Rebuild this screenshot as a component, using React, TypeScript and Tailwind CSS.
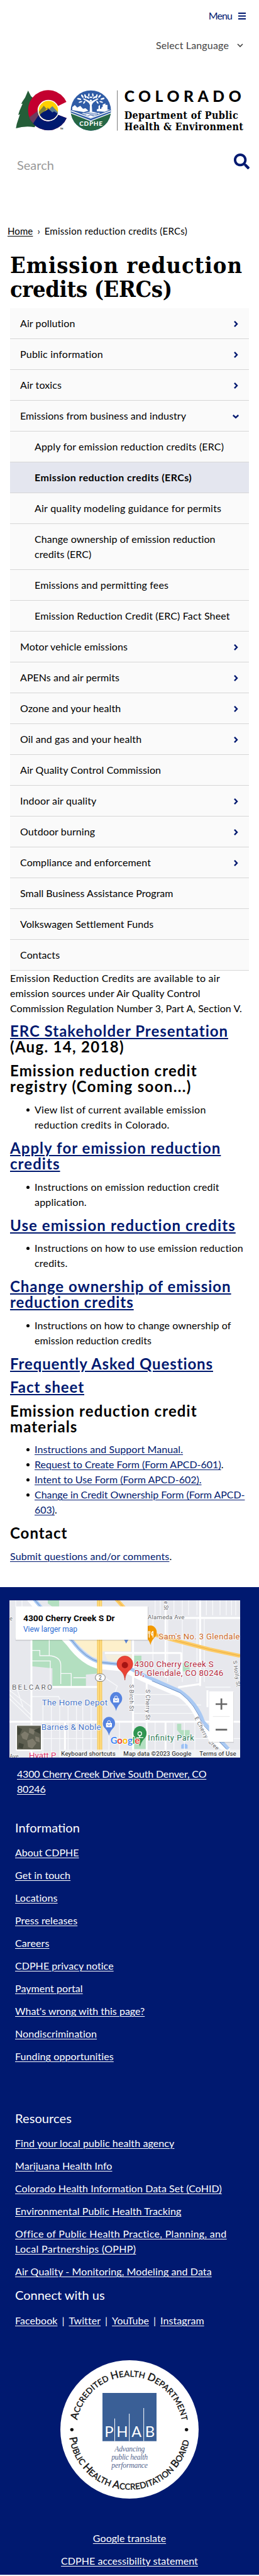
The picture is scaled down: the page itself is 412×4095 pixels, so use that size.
import React from "react";
import { FaSearch } from "react-icons/fa";

type Item = { label: React.ReactNode; kind?: "open" | "closed" | "sub" | "active"; tracking?: string };

const NAV: Item[] = [
  { label: "Air pollution", kind: "closed", tracking: "tracking-[0.09px]" },
  { label: "Public information", kind: "closed", tracking: "tracking-[0.21px]" },
  { label: "Air toxics", kind: "closed", tracking: "tracking-[0.1px]" },
  { label: "Emissions from business and industry", kind: "open", tracking: "tracking-[0.07px]" },
  { label: "Apply for emission reduction credits (ERC)", kind: "sub", tracking: "tracking-[0.16px]" },
  { label: "Emission reduction credits (ERCs)", kind: "active", tracking: "tracking-[0.42px]" },
  { label: "Air quality modeling guidance for permits", kind: "sub", tracking: "tracking-[0.23px]" },
  {
    label: (
      <>
        Change ownership of emission reduction
        <br />
        credits (ERC)
      </>
    ),
    kind: "sub",
    tracking: "tracking-[0.06px]",
  },
  { label: "Emissions and permitting fees", kind: "sub", tracking: "tracking-[0.15px]" },
  { label: "Emission Reduction Credit (ERC) Fact Sheet", kind: "sub", tracking: "tracking-[0.16px]" },
  { label: "Motor vehicle emissions", kind: "closed", tracking: "tracking-[0.1px]" },
  { label: "APENs and air permits", kind: "closed", tracking: "tracking-[0.05px]" },
  { label: "Ozone and your health", kind: "closed", tracking: "tracking-[0.05px]" },
  { label: "Oil and gas and your health", kind: "closed", tracking: "tracking-[0.1px]" },
  { label: "Air Quality Control Commission", tracking: "tracking-[0.1px]" },
  { label: "Indoor air quality", kind: "closed", tracking: "tracking-[0.15px]" },
  { label: "Outdoor burning", kind: "closed", tracking: "tracking-[0.1px]" },
  { label: "Compliance and enforcement", kind: "closed", tracking: "tracking-[0.1px]" },
  { label: "Small Business Assistance Program", tracking: "tracking-[0.01px]" },
  { label: "Volkswagen Settlement Funds", tracking: "tracking-[0.05px]" },
  { label: "Contacts", tracking: "tracking-[0.1px]" },
];

function Arrow({ down }: { down?: boolean }) {
  return (
    <svg className="mt-px mr-[15px] h-3 w-3 shrink-0" viewBox="0 0 12 12" fill="none" stroke="#001970" strokeWidth="2.4">
      <path d={down ? "M1.8 4 6 7.8 10.2 4" : "M4 1.8 8 6 4 10.2"} />
    </svg>
  );
}

function NavRow({ item }: { item: Item }) {
  const sub = item.kind === "sub" || item.kind === "active";
  return (
    <li
      className={
        "flex items-center justify-between border-b border-[#d6d6d6] py-3 leading-6 " +
        (sub ? "pl-[39px] " : "pl-4 ") +
        (item.kind === "active" ? "bg-[#e4e6ef] font-bold " : "bg-[#fafafa] ") +
        (item.tracking ?? "")
      }
    >
      <span className="whitespace-nowrap">{item.label}</span>
      {item.kind === "closed" && <Arrow />}
      {item.kind === "open" && <Arrow down />}
    </li>
  );
}

function A({ children, className = "" }: { children: React.ReactNode; className?: string }) {
  return (
    <a href="#" className={"underline decoration-1 underline-offset-2 " + className}>
      {children}
    </a>
  );
}

function H2({ children, className }: { children: React.ReactNode; className: string }) {
  return <h2 className={"text-[24px] leading-[25px] font-bold whitespace-nowrap " + className}>{children}</h2>;
}

function HA({ children }: { children: React.ReactNode }) {
  return (
    <a href="#" className="text-[#001970] underline decoration-2 underline-offset-2">
      {children}
    </a>
  );
}

function Bullet({ children, className = "" }: { children: React.ReactNode; className?: string }) {
  return (
    <li className={"relative pl-[39px] whitespace-nowrap " + className}>
      <span className="absolute top-[10px] left-[26px] h-[5px] w-[5px] rounded-full bg-black" />
      {children}
    </li>
  );
}

function Logo() {
  return (
    <svg className="h-[66px] w-[364px]" viewBox="75 430 1092 198">
      <path
        d="M134 433 L120 466 L108 484 L101 497 L108 495 L93 530 L87 549 L95 546 L80 592 L76 613 Q120 600 165 608 L190 560 L160 470 L148 460Z"
        fill="#245d38"
      />
      <defs>
        <clipPath id="c-shape">
          <path d="M317 487 A96 96 0 1 0 318 564 L275 548 A50 50 0 1 1 274 508Z" />
        </clipPath>
        <clipPath id="c-disc">
          <circle cx="231" cy="528" r="46" />
        </clipPath>
        <clipPath id="seal">
          <circle cx="433.500" cy="528" r="96" />
        </clipPath>
      </defs>
      <g clipPath="url(#c-shape)">
        <rect x="130" y="430" width="200" height="200" fill="#c3002f" />
        <path d="M130 588 L188 540 L340 540 L340 630 L130 630Z" fill="#001970" />
        <path d="M134 565 L182 528 L188 545 L158 590Z" fill="#6b3b5d" />
        <path d="M136 565 L158 588 L168 606 L150 606Z" fill="#245d38" />
      </g>
      <circle cx="231" cy="528" r="51" fill="#fff" />
      <g clipPath="url(#c-disc)">
        <rect x="180" y="478" width="102" height="102" fill="#ffd100" />
        <path d="M180 540 L209 505 L222 520 L200 548Z" fill="#7d8038" />
        <path d="M232 524 L250 507 L285 545 L255 545Z" fill="#5c7f93" />
        <path d="M222 520 L228 513 L240 524 L232 530Z" fill="#a08b30" />
        <path d="M180 555 L202 538 L232 521 L250 537 L258 532 L285 548 L285 580 L180 580Z" fill="#001970" />
      </g>
      <text x="287" y="620" fontSize="9" fontFamily="Lato" fontWeight="bold">TM</text>

      <g clipPath="url(#seal)">
        <rect x="335" y="430" width="200" height="200" fill="#2f5ca6" />
        <path d="M337 537 L433 580 L530 537 L530 630 L337 630Z" fill="#266845" />
        <path d="M337 529 L433 564 L530 529 M337 540 L433 577 L530 540" fill="none" stroke="#fff" strokeWidth="4" />
        <path d="M345 526 L345 512 L357 502 L369 514 L383 506 L396 520 L408 517 L422 529 L400 536Z" fill="#fff" />
        <path d="M462 531 L462 523 L470 520 L470 507 L477 501 L477 520 L484 520 L484 514 L490 510 L490 500 L503 494 L503 501 L513 501 L513 524 L525 524 L500 534Z" fill="#fff" />
        <path d="M390 541 L425 534 L445 534 L480 541 L433 562Z" fill="#fff" />
        <path d="M404 546 q16 -7 30 0 t34 -1 M398 541 q18 -5 32 -1 t38 0 M418 553 q14 -6 30 0" fill="none" stroke="#2f5ca6" strokeWidth="2.500" />
        <path d="M428 536 L429 502 L424 492 L410 482 L396 474 L399 470 L424 481 L433 487 L443 481 L466 470 L470 474 L456 482 L443 492 L438 502 L440 536Z" fill="#fff" />
        <circle cx="433.500" cy="481" r="5.500" fill="#fff" />
        <g fill="#fff">
          <ellipse cx="378" cy="473" rx="10" ry="4" transform="rotate(15 378 473)" />
          <ellipse cx="384" cy="487" rx="9" ry="3.500" transform="rotate(-20 384 487)" />
          <ellipse cx="402" cy="489" rx="8" ry="3.500" transform="rotate(-55 402 489)" />
          <ellipse cx="393" cy="460" rx="9" ry="4" transform="rotate(55 393 460)" />
          <ellipse cx="407" cy="460" rx="10" ry="4" transform="rotate(75 407 460)" />
          <ellipse cx="419" cy="466" rx="9" ry="3.500" transform="rotate(35 419 466)" />
          <ellipse cx="424" cy="454" rx="8" ry="3.500" transform="rotate(95 424 454)" />
          <ellipse cx="434" cy="465" rx="7" ry="3.500" />
          <ellipse cx="443" cy="454" rx="8" ry="3.500" transform="rotate(80 443 454)" />
          <ellipse cx="450" cy="466" rx="9" ry="3.500" transform="rotate(-35 450 466)" />
          <ellipse cx="461" cy="460" rx="10" ry="4" transform="rotate(-75 461 460)" />
          <ellipse cx="475" cy="460" rx="9" ry="4" transform="rotate(-50 475 460)" />
          <ellipse cx="489" cy="472" rx="10" ry="4" transform="rotate(-15 489 472)" />
          <ellipse cx="483" cy="487" rx="9" ry="3.500" transform="rotate(20 483 487)" />
          <ellipse cx="465" cy="489" rx="8" ry="3.500" transform="rotate(55 465 489)" />
        </g>
        <text x="379" y="602" fill="#fff" fontSize="30" fontWeight="900" fontFamily="Lato" textLength="110">CDPHE</text>
      </g>
      <rect x="558.500" y="432" width="3" height="192" fill="#777" />
      <text x="593" y="487" fontSize="74" fontWeight="900" fontFamily="Lato" textLength="558">COLORADO</text>
      <text x="593" y="567" fontSize="48" fontWeight="bold" fontFamily="'DejaVu Serif Condensed', 'DejaVu Serif', serif" textLength="543">Department of Public</text>
      <text x="593" y="622" fontSize="48" fontWeight="bold" fontFamily="'DejaVu Serif Condensed', 'DejaVu Serif', serif" textLength="568">Health &amp; Environment</text>
    </svg>
  );
}

function Pin({ x, y, s, fill }: { x: number; y: number; s: number; fill: string }) {
  return (
    <g transform={`translate(${x} ${y}) scale(${s})`}>
      <path d="M0 0 C-3 -14 -9 -22 -18 -32 A29 29 0 1 1 18 -32 C9 -22 3 -14 0 0Z" fill={fill} transform="scale(1 1.08)" />
    </g>
  );
}

function MapPicture() {
  return (
    <svg className="block h-[250px] w-[367px]" viewBox="45 191 1101 750" fontFamily="Roboto">
      <rect x="45" y="190" width="1101" height="752" fill="#e7e8ed" />
      <path d="M228 190 H282 V222 H250 L228 205Z M150 380 H320 L345 420 Q400 490 470 512 L470 540 L410 545 V600 H250 V515 L150 505Z" fill="#b3dfc0" />
      <path d="M300 470 L335 470 L350 520 L380 545 V600 H300Z" fill="#b3dfc0" />
      <path d="M640 455 H675 V505 H640Z M845 780 H865 V810 H905 V850 H880 L845 810Z M640 800 H700 V900 H640Z M870 490 H905 V530 H870Z" fill="#b3dfc0" />
      <path d="M865 880 q15 -12 30 0 v18 h-30Z" fill="#9cc0f5" />
      <path d="M350 380 H625 V435 H490 V470 L440 460 Q390 420 350 380Z" fill="#fdf0cb" />
      <path d="M500 450 H630 V480 H560 L520 490Z" fill="#f3eedd" />
      <g stroke="#f8f9fb" strokeWidth="4" fill="none">
        {[75, 105, 740, 765, 830, 870, 900, 940, 985, 1015, 1050, 1080, 1105, 1125].map((x) => (
          <path key={x} d={`M${x} 190 V${x < 200 ? 370 : 262}`} />
        ))}
        {[205, 245, 285, 325, 365, 395, 435].map((x) => (
          <path key={x} d={`M${x} 690 V940`} />
        ))}
        {[730, 800, 870, 940, 975].map((x) => (
          <path key={x} d={`M${x} 280 V580`} />
        ))}
        {[520, 570, 740, 830, 880, 930].map((x) => (
          <path key={x} d={`M${x} 770 V940`} />
        ))}
        <path d="M150 430 H190 V455 H235 V380 M235 455 Q290 460 290 500 V590 M150 480 H240 V600 M290 540 H340 V600 M350 560 H410 M150 650 H280 L300 700 M45 640 L150 740 M45 660 L150 760 M45 620 L150 700 M80 610 L110 700 M150 850 H480 M640 640 H850 M640 690 H960 M640 730 H940 M500 560 L560 600 L545 640 M700 850 H1146 M980 605 H1100" />
      </g>
      <g stroke="#fff" strokeWidth="9" fill="none">
        <path d="M150 380 V940 M250 604 H470 M45 770 H1146 M700 275 H1146 M635 380 V940 M500 442 H865 M865 440 V560 M790 190 V560 M700 570 V940 M955 190 V600 M850 606 L955 590 M310 770 V940 M790 770 V940 M990 620 V700" />
      </g>
      <path d="M140 180 Q230 290 330 395 Q400 490 480 505 L590 515 Q640 545 720 580 L860 640 Q930 690 960 780 L1010 850 L1090 910" fill="none" stroke="#fff" strokeWidth="30" />
      <path d="M158 180 Q250 290 345 385 Q410 470 480 487 L590 498 Q640 530 725 565 L860 625 Q940 680 970 770 L1090 900" fill="none" stroke="#a9c9f3" strokeWidth="16" />
      <path d="M158 180 Q250 290 345 385 Q410 470 480 487 L590 498 M725 575 L860 632 Q935 690 965 780 L1080 900" fill="none" stroke="#6b8fc4" strokeWidth="3" />
      <path d="M475 190 L476 940" stroke="#f5ca62" strokeWidth="24" />
      <path d="M475 190 L476 940" stroke="#ffdc7e" strokeWidth="16" />
      <path d="M475 190 L476 940" stroke="#efbd55" strokeWidth="3" />
      <path d="M550 180 L600 235 L720 350 L840 383 L1000 425 L1146 456" stroke="#fdcb66" strokeWidth="18" fill="none" />
      <path d="M550 180 L600 235 L720 350 L840 383 L1000 425 L1146 456" stroke="#e6a738" strokeWidth="2.500" fill="none" />
      <rect x="455" y="542" width="47" height="35" rx="17" fill="#fff" stroke="#777" strokeWidth="3" />
      <text x="471" y="569" fontSize="25" fill="#444">2</text>

      <g fill="#5f6368" stroke="#fff" strokeWidth="5" paintOrder="stroke">
        <text x="705" y="282" fontSize="29" textLength="175">Alameda Ave</text>
        <text x="46" y="288" fontSize="26">e</text>
        <text transform="translate(783 195) rotate(90)" fontSize="25">e St</text>
        <text x="57" y="617" fontSize="35" textLength="192">BELCARO</text>
        <text transform="translate(617 592) rotate(90)" fontSize="27" textLength="127">S Birch St</text>
        <text transform="translate(696 616) rotate(90)" fontSize="27" textLength="146">S Cherry St</text>
        <text transform="translate(1112 480) rotate(82)" fontSize="26" textLength="125">S Holly St</text>
        <text transform="translate(928 752) rotate(63)" fontSize="27" textLength="110">E Cherry</text>
        <text transform="translate(992 868) rotate(42)" fontSize="27" textLength="58">Cree</text>
        <text x="46" y="944" fontSize="26">Ave</text>
      </g>

      <Pin x={718} y={404} s={1.03} fill="#f29900" />
      <path d="M709 337 v14 m6 -14 v14 m-3 0 v18 m18 -32 v32 m0 -30 q-8 4 -7 17 h7" stroke="#fff" strokeWidth="4" fill="none" />
      <text x="757" y="376" fontSize="39" fill="#c9661f" stroke="#fff" strokeWidth="5" paintOrder="stroke" textLength="387">Sam&apos;s No. 3 Glendale</text>
      <path d="M592 378 H613 L602 397Z" fill="#5b83d5" />

      <g transform="translate(596 572)">
        <path d="M0 0 C-3 -32 -14 -40 -29 -53 A38 38 0 1 1 29 -53 C14 -40 3 -32 0 0Z" fill="#ea4335" stroke="#c5352b" strokeWidth="2" />
        <circle cy="-72" r="15" fill="#a51412" />
      </g>
      <g fill="#b3293e" fontSize="40" stroke="#fff" strokeWidth="5" paintOrder="stroke">
        <text x="641" y="509" textLength="378">4300 Cherry Creek S</text>
        <text x="641" y="551" textLength="425">Dr, Glendale, CO 80246</text>
      </g>
      <g fill="#4674c8" fontSize="40" stroke="#fff" strokeWidth="5" paintOrder="stroke">
        <text x="200" y="692" textLength="313">The Home Depot</text>
        <text x="197" y="809" textLength="285">Barnes &amp; Noble</text>
      </g>
      <Pin x={554} y={719} s={1} fill="#5583e0" />
      <Pin x={520} y={837} s={1} fill="#5583e0" />
      <g fill="#fff">
        <path d="M540 658 h28 v20 h-28Z" />
        <path d="M506 776 h28 v20 h-28Z" />
      </g>
      <path d="M547 658 v-4 a7 7 0 0 1 14 0 v4 M513 776 v-4 a7 7 0 0 1 14 0 v4" fill="none" stroke="#fff" strokeWidth="3" />
      <path d="M548 664 a6 6 0 0 0 12 0 M514 782 a6 6 0 0 0 12 0" fill="none" stroke="#5583e0" strokeWidth="3" />
      <Pin x={668} y={889} s={1.08} fill="#2f9551" />
      <circle cx="667" cy="827" r="9" fill="none" stroke="#fff" strokeWidth="4" />
      <path d="M650 846 h34 M667 834 v12" stroke="#fff" strokeWidth="4" />
      <text x="706" y="861" fontSize="38" fill="#2a7a55" stroke="#fff" strokeWidth="5" paintOrder="stroke" textLength="220">Infinity Park</text>

      <g fontSize="45" fontFamily="Lato" fontWeight="bold" stroke="#fff" strokeWidth="5" paintOrder="stroke">
        <text x="527" y="876" textLength="140">
          <tspan fill="#4285f4">G</tspan><tspan fill="#ea4335">o</tspan><tspan fill="#fbbc05">o</tspan><tspan fill="#4285f4">g</tspan><tspan fill="#34a853">l</tspan><tspan fill="#ea4335">e</tspan>
        </text>
      </g>

      <rect x="74" y="222" width="634" height="162" fill="#000" fillOpacity="0.12" />
      <rect x="75" y="220" width="630" height="159" fill="#fff" />
      <text x="111" y="290" fontSize="41" fontWeight="bold" fill="#000" textLength="437" lengthAdjust="spacingAndGlyphs">4300 Cherry Creek S Dr</text>
      <text x="111" y="341" fontSize="36" fill="#2b6bd3" textLength="258">View larger map</text>

      <rect x="1000" y="628" width="116" height="242" fill="#000" fillOpacity="0.12" />
      <rect x="998" y="625" width="116" height="241" fill="#fff" />
      <path d="M1016 745 H1096" stroke="#e6e6e6" strokeWidth="3" />
      <path d="M1029 686 H1084 M1056.500 659 V712 M1029 808 H1084" stroke="#666" strokeWidth="8" />

      <text x="138" y="944" fontSize="40" fill="#d6336c" stroke="#fff" strokeWidth="5" paintOrder="stroke">Hyatt P</text>
      <rect x="282" y="903" width="864" height="39" fill="#f3f4f6" fillOpacity="0.88" />
      <g fontSize="29" fill="#111">
        <text x="292" y="932" textLength="259">Keyboard shortcuts</text>
        <text x="589" y="932" textLength="324">Map data ©2023 Google</text>
        <text x="952" y="932" textLength="175">Terms of Use</text>
      </g>
      <rect x="76" y="786" width="124" height="123" fill="#fff" />
      <rect x="81" y="789" width="114" height="113" fill="#5e5f51" />
      <g fill="#8c8878" fillOpacity="0.7">
        <path d="M100 830 l18 -14 20 12 -10 30 -20 -8Z M140 800 l28 8 -8 24 -22 -10Z M130 860 l26 -10 18 22 -20 26 -20 -8Z M168 840 l20 6 2 22 -20 -6Z" />
      </g>
      <path d="M84 795 l22 10 -14 30 -8 -4Z M90 870 l24 8 -6 20 -22 -4Z M160 812 l30 -14 2 30Z" fill="#3b4034" fillOpacity="0.8" />
    </svg>
  );
}

function PhabSeal() {
  return (
    <svg className="h-[220px] w-[220px]" viewBox="288 95 660 660">
      <circle cx="618" cy="425" r="330" fill="#fff" />
      <defs>
        <path id="arc-top" d="M 369 381 A 253 253 0 0 1 867 381" />
        <path id="arc-bottom" d="M 331 464 A 290 290 0 0 0 905 464" />
      </defs>
      <g fontFamily="Lato" fill="#111" stroke="#111" strokeWidth="1.200">
        <text fontSize="39" letterSpacing="0.7">
          <textPath href="#arc-top">
            <tspan fontSize="49">A</tspan>CCREDITED <tspan fontSize="49">H</tspan>EALTH <tspan fontSize="49">D</tspan>EPARTMENT
          </textPath>
        </text>
        <text fontSize="40" letterSpacing="0.4">
          <textPath href="#arc-bottom">
            <tspan fontSize="50">P</tspan>UBLIC <tspan fontSize="50">H</tspan>EALTH <tspan fontSize="50">A</tspan>CCREDITATION <tspan fontSize="50">B</tspan>OARD
          </textPath>
        </text>
      </g>
      <circle cx="343" cy="426" r="8" fill="#111" />
      <circle cx="890" cy="426" r="8" fill="#111" />
      <rect x="489" y="251" width="258" height="230" fill="#3a5f96" />
      <path d="M547.500 373 V481 M617 350 V481 M686 323 V481" stroke="#fff" strokeWidth="3" />
      <g fontFamily="Lato" fontSize="72" fill="#fff">
        <text x="499" y="461">P</text>
        <text x="556" y="461">H</text>
        <text x="628" y="461" fontSize="70">A</text>
        <text x="692" y="461">B</text>
      </g>
      <g fontFamily="'Liberation Serif', serif" fontStyle="italic" fontSize="35" fill="#56688f">
        <text x="547" y="530" textLength="144">Advancing</text>
        <text x="532" y="568" textLength="173">public health</text>
        <text x="532" y="607" textLength="173">performance</text>
      </g>
    </svg>
  );
}

const INFO: [string, string][] = [
  ["About CDPHE", "tracking-[0px]"],
  ["Get in touch", "tracking-[0.1px]"],
  ["Locations", "tracking-[0.1px]"],
  ["Press releases", "tracking-[0.1px]"],
  ["Careers", "tracking-[0.1px]"],
  ["CDPHE privacy notice", "tracking-[0.05px]"],
  ["Payment portal", "tracking-[0.05px]"],
  ["What's wrong with this page?", "tracking-[0.01px]"],
  ["Nondiscrimination", "tracking-[0.1px]"],
  ["Funding opportunities", "tracking-[0.1px]"],
];

export default function App() {
  return (
    <div className="w-[412px] overflow-hidden bg-white font-['Lato',sans-serif] text-[16px] leading-6 text-black">
      <header className="h-[349px]">
        <div className="flex h-[50px] items-center justify-end gap-[10px] pr-[21px] text-[#001970]">
          <span className="text-[16px] tracking-[-0.9px]">Menu</span>
          <svg className="h-[11px] w-3" viewBox="0 0 12 11" fill="currentColor">
            <path d="M0 0h12v2H0z M0 4.500h12v2H0z M0 9h12v2H0z" />
          </svg>
        </div>
        <div className="mt-[10px] flex h-6 items-center justify-end gap-[13px] pr-[25px] text-[#444]">
          <span className="tracking-[0.16px]">Select Language</span>
          <svg className="h-[6px] w-[10px]" viewBox="0 0 10 6" fill="none" stroke="currentColor" strokeWidth="1.700">
            <path d="M1 1l4 4 4-4" />
          </svg>
        </div>
        <div className="mt-[59px] ml-[25px] h-[66px]">
          <Logo />
        </div>
        <div className="mt-[33px] flex h-8 items-center justify-between pr-[15px] pl-[27px]">
          <span className="mt-[8px] text-[20px] text-[#999]">Search</span>
          <FaSearch className="-mt-[4px] h-[25px] w-[25px] text-[#001970]" />
        </div>
      </header>

      <div className="flex items-center pt-[6px] pl-3 text-[15px] leading-6 whitespace-nowrap">
        <A className="tracking-[0.1px]">Home</A>
        <span className="mx-[7px]">›</span>
        <span className="tracking-[0.27px]">Emission reduction credits (ERCs)</span>
      </div>

      <h1 className="mt-[23px] mb-[12px] h-[76px] pl-4 font-['DejaVu_Serif_Condensed','DejaVu_Serif',serif] text-[36px] leading-[38px] font-bold whitespace-nowrap">
        <span className="block tracking-[0.97px]">Emission reduction</span>
        <span className="block tracking-[-0.39px]">credits (ERCs)</span>
      </h1>

      <ul className="ml-4 w-[380px]">
        {NAV.map((item, i) => (
          <NavRow key={i} item={item} />
        ))}
      </ul>

      <main className="h-[980px] pl-4">
        <p className="whitespace-nowrap">
          <span className="block tracking-[0.25px]">Emission Reduction Credits are available to air</span>
          <span className="block tracking-[0.1px]">emission sources under Air Quality Control</span>
          <span className="block tracking-[0.05px]">Commission Regulation Number 3, Part A, Section V.</span>
        </p>
        <H2 className="mt-[11px]">
          <span className="block tracking-[0.98px]">
            <HA>ERC Stakeholder Presentation</HA>
          </span>
          <span className="block tracking-[1.3px]">(Aug. 14, 2018)</span>
        </H2>
        <H2 className="mt-[13px]">
          <span className="block tracking-[1.11px]">Emission reduction credit</span>
          <span className="block tracking-[1.32px]">registry (Coming soon...)</span>
        </H2>
        <ul className="mt-[13px]">
          <Bullet className="tracking-[0.25px]">
            View list of current available emission
            <br />
            reduction credits in Colorado.
          </Bullet>
        </ul>
        <H2 className="mt-[12px] tracking-[1.05px]">
          <HA>
            Apply for emission reduction
            <br />
            credits
          </HA>
        </H2>
        <ul className="mt-[13px]">
          <Bullet className="tracking-[0.2px]">
            Instructions on emission reduction credit
            <br />
            application.
          </Bullet>
        </ul>
        <H2 className="mt-[12px] tracking-[1.08px]">
          <HA>Use emission reduction credits</HA>
        </H2>
        <ul className="mt-[12px]">
          <Bullet className="tracking-[0.2px]">
            Instructions on how to use emission reduction
            <br />
            credits.
          </Bullet>
        </ul>
        <H2 className="mt-[12px] tracking-[0.95px]">
          <HA>
            Change ownership of emission
            <br />
            reduction credits
          </HA>
        </H2>
        <ul className="mt-[13px]">
          <Bullet className="tracking-[0.1px]">
            Instructions on how to change ownership of
            <br />
            emission reduction credits
          </Bullet>
        </ul>
        <H2 className="mt-[12px] tracking-[0.88px]">
          <HA>Frequently Asked Questions</HA>
        </H2>
        <H2 className="mt-[12px] tracking-[0.9px]">
          <HA>Fact sheet</HA>
        </H2>
        <H2 className="mt-[13px] tracking-[1.11px]">
          Emission reduction credit
          <br />
          materials
        </H2>
        <ul className="mt-[12px]">
          <Bullet className="tracking-[0.1px]">
            <A className="text-[#001970]">Instructions and Support Manual.</A>
          </Bullet>
          <Bullet>
            <A className="text-[#001970]">Request to Create Form (Form APCD-601)</A>.
          </Bullet>
          <Bullet>
            <A className="text-[#001970]">Intent to Use Form (Form APCD-602).</A>
          </Bullet>
          <Bullet className="tracking-[-0.05px]">
            <A className="text-[#001970]">
              Change in Credit Ownership Form (Form APCD-
              <br />
              603)
            </A>
            .
          </Bullet>
        </ul>
        <H2 className="mt-[12px] tracking-[1px]">Contact</H2>
        <p className="mt-[13px] tracking-[0.14px]">
          <A className="text-[#001970]">Submit questions and/or comments</A>.
        </p>
      </main>

      <footer className="h-[1570px] bg-[#001970] pt-[21px] text-white">
        <div className="ml-[15px]">
          <MapPicture />
        </div>
        <p className="mt-[14px] ml-[27px] tracking-[-0.16px] whitespace-nowrap">
          <A>
            4300 Cherry Creek Drive South Denver, CO
            <br />
            80246
          </A>
        </p>
        <div className="ml-6 whitespace-nowrap">
          <h3 className="mt-[37px] text-[20px] leading-6">Information</h3>
          <ul className="mt-[16px] space-y-3">
            {INFO.map(([t, k]) => (
              <li key={t} className={k}>
                <A>{t}</A>
              </li>
            ))}
          </ul>
          <h3 className="mt-[74px] text-[20px] leading-6 tracking-[0.1px]">Resources</h3>
          <ul className="mt-[16px] space-y-3">
            <li className="tracking-[0.1px]"><A>Find your local public health agency</A></li>
            <li className="tracking-[0.1px]"><A>Marijuana Health Info</A></li>
            <li className="tracking-[0.07px]"><A>Colorado Health Information Data Set (CoHID)</A></li>
            <li className="tracking-[0.1px]"><A>Environmental Public Health Tracking</A></li>
            <li className="tracking-[0.32px]">
              <A>
                Office of Public Health Practice, Planning, and
                <br />
                Local Partnerships (OPHP)
              </A>
            </li>
            <li className="tracking-[0.1px]"><A>Air Quality - Monitoring, Modeling and Data</A></li>
          </ul>
          <h3 className="mt-[13px] text-[20px] leading-6">Connect with us</h3>
          <p className="mt-[17px] flex tracking-[0.05px]">
            <A>Facebook</A>
            <span className="mx-[7px]">|</span>
            <A>Twitter</A>
            <span className="mx-[7px]">|</span>
            <A>YouTube</A>
            <span className="mx-[7px]">|</span>
            <A>Instagram</A>
          </p>
        </div>
        <div className="mt-[51px] flex justify-center">
          <PhabSeal />
        </div>
        <div className="mt-[51px] flex flex-col items-center gap-3 tracking-[0.06px]">
          <A>Google translate</A>
          <A>CDPHE accessibility statement</A>
        </div>
      </footer>
      <div className="h-[2px] bg-white" />
    </div>
  );
}
